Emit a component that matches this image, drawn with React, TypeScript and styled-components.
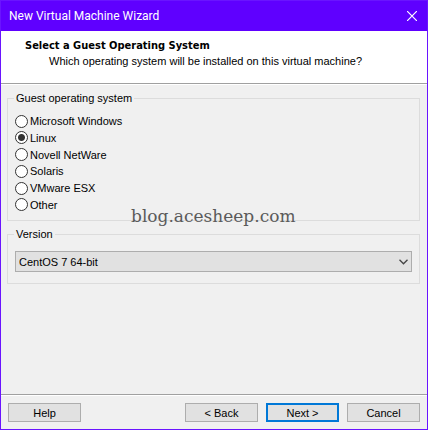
import React, { useState } from 'react';
import styled, { createGlobalStyle, css } from 'styled-components';

const GlobalStyle = createGlobalStyle`
  *, *::before, *::after { box-sizing: border-box; }
  html, body, #root { height: 100%; }
  body {
    margin: 0;
    background: #f0f0f0;
    color: #000;
    font: 11px/14px Tahoma, "Liberation Sans", sans-serif;
  }
  button, select, input { font: inherit; color: inherit; margin: 0; }
`;

const Dialog = styled.div`
  display: flex;
  flex-direction: column;
  min-height: 100%;
  border: 1px solid #6a14ff;
  background: #f0f0f0;
`;

const TitleBar = styled.header`
  display: flex;
  align-items: center;
  justify-content: space-between;
  height: 30px;
  padding: 0 7px 0 8px;
  background: #5f00ff;
  color: #fff;
`;

const Title = styled.span`
  font: 12px/16px "Segoe UI", Roboto, sans-serif;
`;

const CloseButton = styled.button`
  display: flex;
  align-items: center;
  justify-content: center;
  width: 16px;
  height: 16px;
  padding: 0;
  border: 0;
  background: none;
  color: #fff;
`;

const Heading = styled.section`
  height: 54px;
  padding: 7px 24px 0;
  background: #fff;
  border-bottom: 1px solid #fff;
  box-shadow: inset 0 -1px 0 #a0a0a0;
`;

const HeadingTitle = styled.h1`
  margin: 0;
  font: bold 11px/16px Tahoma, "DejaVu Sans Condensed", sans-serif;
`;

const HeadingText = styled.p`
  margin: 0;
  padding-left: 24px;
  line-height: 14px;
`;

const Content = styled.main`
  flex: 1;
  padding: 6px 7px 0 6px;
`;

const Group = styled.fieldset`
  position: relative;
  min-width: 0;
  margin: 0 0 6px;
  padding: 9px 7px 8px;
  border: 1px solid #dcdcdc;
`;

const Legend = styled.legend`
  margin-left: -1px;
  padding: 0 2px;
`;

const Options = styled.div`
  display: flex;
  flex-direction: column;
  justify-content: space-between;
  min-height: 98px;
`;

const Option = styled.label`
  display: flex;
  align-items: center;
  align-self: flex-start;
  gap: 2px;
`;

const Radio = styled.input`
  appearance: none;
  width: 13px;
  height: 13px;
  border: 1px solid #333;
  border-radius: 50%;
  background: #fff;

  &:checked {
    background: radial-gradient(circle, #333 3px, #fff 4px);
  }
`;

const Watermark = styled.span`
  position: absolute;
  left: 123px;
  bottom: -6px;
  color: #5a5a5a;
  font: 17px/20px NSimSun, "DejaVu Serif", serif;
  pointer-events: none;
`;

const SelectBox = styled.div`
  position: relative;
  display: flex;
  align-items: center;
  margin: 1px 0 3px;
`;

const Select = styled.select`
  appearance: none;
  width: 100%;
  height: 21px;
  padding: 0 20px 0 3px;
  border: 1px solid #adadad;
  border-radius: 0;
  background: #e1e1e1;
`;

const Arrow = styled.svg`
  position: absolute;
  right: 4px;
  pointer-events: none;
`;

const Footer = styled.footer`
  display: flex;
  gap: 8px;
  padding: 8px 7px 7px;
  border-top: 1px solid #a0a0a0;
  box-shadow: inset 0 1px 0 #fff;
`;

const Button = styled.button<{ $primary?: boolean; $start?: boolean }>`
  width: 73px;
  height: 19px;
  padding: 0;
  border: 1px solid #adadad;
  background: #e1e1e1;
  ${({ $primary }) => $primary && css`border: 2px solid #0078d7;`}
  ${({ $start }) => $start && css`margin-right: auto;`}
`;

const systems = ['Microsoft Windows', 'Linux', 'Novell NetWare', 'Solaris', 'VMware ESX', 'Other'];

export default function App() {
  const [system, setSystem] = useState('Linux');

  return (
    <>
      <GlobalStyle />
      <Dialog role="dialog" aria-labelledby="wizard-title">
        <TitleBar>
          <Title id="wizard-title">New Virtual Machine Wizard</Title>
          <CloseButton type="button" aria-label="Close">
            <svg width="10" height="10" viewBox="0 0 10 10" fill="none" stroke="currentColor" strokeWidth="1.2">
              <path d="M0 0L10 10M10 0L0 10" />
            </svg>
          </CloseButton>
        </TitleBar>
        <Heading>
          <HeadingTitle>Select a Guest Operating System</HeadingTitle>
          <HeadingText>Which operating system will be installed on this virtual machine?</HeadingText>
        </Heading>
        <Content>
          <Group>
            <Legend>Guest operating system</Legend>
            <Options>
              {systems.map((name) => (
                <Option key={name}>
                  <Radio
                    type="radio"
                    name="system"
                    value={name}
                    checked={system === name}
                    onChange={() => setSystem(name)}
                  />
                  {name}
                </Option>
              ))}
            </Options>
            <Watermark>blog.acesheep.com</Watermark>
          </Group>
          <Group>
            <Legend id="version-label">Version</Legend>
            <SelectBox>
              <Select aria-labelledby="version-label">
                <option>CentOS 7 64-bit</option>
              </Select>
              <Arrow width="9" height="6" viewBox="0 0 9 6" fill="none" stroke="#444" strokeWidth="1.3">
                <path d="M0.5 0.8L4.5 4.8L8.5 0.8" />
              </Arrow>
            </SelectBox>
          </Group>
        </Content>
        <Footer>
          <Button type="button" $start>Help</Button>
          <Button type="button">&lt; Back</Button>
          <Button type="button" $primary>Next &gt;</Button>
          <Button type="button">Cancel</Button>
        </Footer>
      </Dialog>
    </>
  );
}
